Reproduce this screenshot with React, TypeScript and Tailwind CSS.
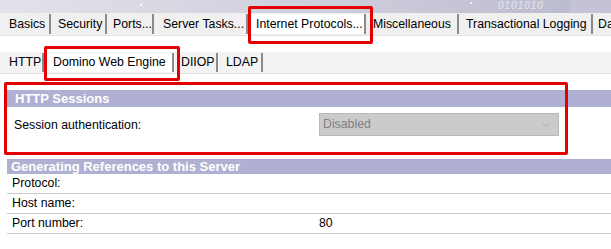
import { ChevronDown } from "lucide-react";

const mainTabs = [
  { label: "Basics", w: "w-[51px]", pl: "pl-[9px]" },
  { label: "Security", w: "w-[56px]", pl: "pl-[7px]" },
  { label: "Ports...", w: "w-[47px]", pl: "pl-[6px]" },
  { label: "Server Tasks...", w: "w-[94px]", pl: "pl-[9px]" },
  { label: "Internet Protocols...", w: "w-[118px]", pl: "pl-[8px]", active: true },
  { label: "Miscellaneous", w: "w-[93px]", pl: "pl-[7px]" },
  { label: "Transactional Logging", w: "w-[134px]", pl: "pl-[7px]" },
  { label: "Database Cache", w: "w-[120px]", pl: "pl-[5px]" },
];

const subTabs = [
  { label: "HTTP", w: "w-[44px]", pl: "pl-[9px]" },
  { label: "Domino Web Engine", w: "w-[130px]", pl: "pl-[9px]", active: true },
  { label: "DIIOP", w: "w-[44px]", pl: "pl-[7px]" },
  { label: "LDAP", w: "w-[45px]", pl: "pl-[8px]" },
];

const refRows = [
  { label: "Protocol:", value: "" },
  { label: "Host name:", value: "" },
  { label: "Port number:", value: "80" },
];

export default function App() {
  return (
    <div className="relative w-[611px] h-[249px] overflow-hidden bg-white text-[12.3px] text-black font-['Liberation_Sans',Arial,sans-serif]">
      {/* banner strip */}
      <div className="relative h-[13px] bg-gradient-to-r from-[#e2e2ea] via-[#d0d0de] to-[#b9b9cd] overflow-hidden">
        <span className="absolute left-[498px] top-0 text-[10px] leading-[11px] italic tracking-[1px] text-[#e6e6f0]">
          0101010
        </span>
        <span className="absolute left-[140px] top-[4px] h-[2px] w-[2px] bg-white/80" />
        <span className="absolute left-[470px] top-[2px] h-[2px] w-[2px] bg-white/70" />
        <div className="absolute left-[570px] top-0 h-[13px] w-[41px] bg-[#c3c3d5]" />
      </div>

      {/* main tabs */}
      <div className="flex h-[23px] bg-[#f0f0f0] border-b border-[#e4e4e4]">
        {mainTabs.map((t) => (
          <div
            key={t.label}
            className={`${t.w} ${t.pl} shrink-0 flex items-center whitespace-nowrap overflow-hidden border-r-2 border-r-[#8a8a8a] my-[1px] ${
              t.active ? "bg-white" : ""
            }`}
          >
            {t.label}
          </div>
        ))}
      </div>

      <div className="h-[16px]" />

      {/* sub tabs */}
      <div className="flex h-[22px] bg-[#f3f3f3] border-b border-[#e2e2e2]">
        {subTabs.map((t) => (
          <div
            key={t.label}
            className={`${t.w} ${t.pl} shrink-0 flex items-center whitespace-nowrap border-r-2 border-r-[#8a8a8a] my-[1px] ${
              t.active ? "bg-white" : ""
            }`}
          >
            {t.label}
          </div>
        ))}
      </div>

      <div className="h-[16px]" />

      {/* HTTP Sessions */}
      <div className="ml-[7px]">
        <div className="h-[17px] bg-[#b0b0d2] pl-[8px] flex items-center font-bold text-white text-[13px]">
          HTTP Sessions
        </div>
        <div className="h-[52px] flex items-start">
          <div className="w-[312px] pl-[7px] pt-[9px]">Session authentication:</div>
          <div className="mt-[6px] w-[240px] h-[23px] bg-[#cbcbcb] border border-[#b9b9b9] flex items-center justify-between pl-[3px] pr-[6px] text-[#808080]">
            <span>Disabled</span>
            <ChevronDown size={12} strokeWidth={1.2} className="text-[#9a9a9a]" />
          </div>
        </div>

        {/* Generating References */}
        <div className="h-[15px] bg-[#b0b0d2] pl-[4px] flex items-center font-bold text-white text-[13px]">
          Generating References to this Server
        </div>
        {refRows.map((r) => (
          <div key={r.label} className="h-[20px] flex items-center border-b border-[#c8c8c8]">
            <div className="w-[312px] pl-[5px]">{r.label}</div>
            <div>{r.value}</div>
          </div>
        ))}
      </div>

      {/* annotation boxes */}
      <div className="absolute left-[248px] top-[6px] w-[125px] h-[38px] border-[3px] border-[#e40000] rounded-[2px]" />
      <div className="absolute left-[44px] top-[46px] w-[136px] h-[35px] border-[3px] border-[#e40000] rounded-[2px]" />
      <div className="absolute left-[4px] top-[82px] w-[564px] h-[73px] border-[3px] border-[#e40000] rounded-[2px]" />
    </div>
  );
}
